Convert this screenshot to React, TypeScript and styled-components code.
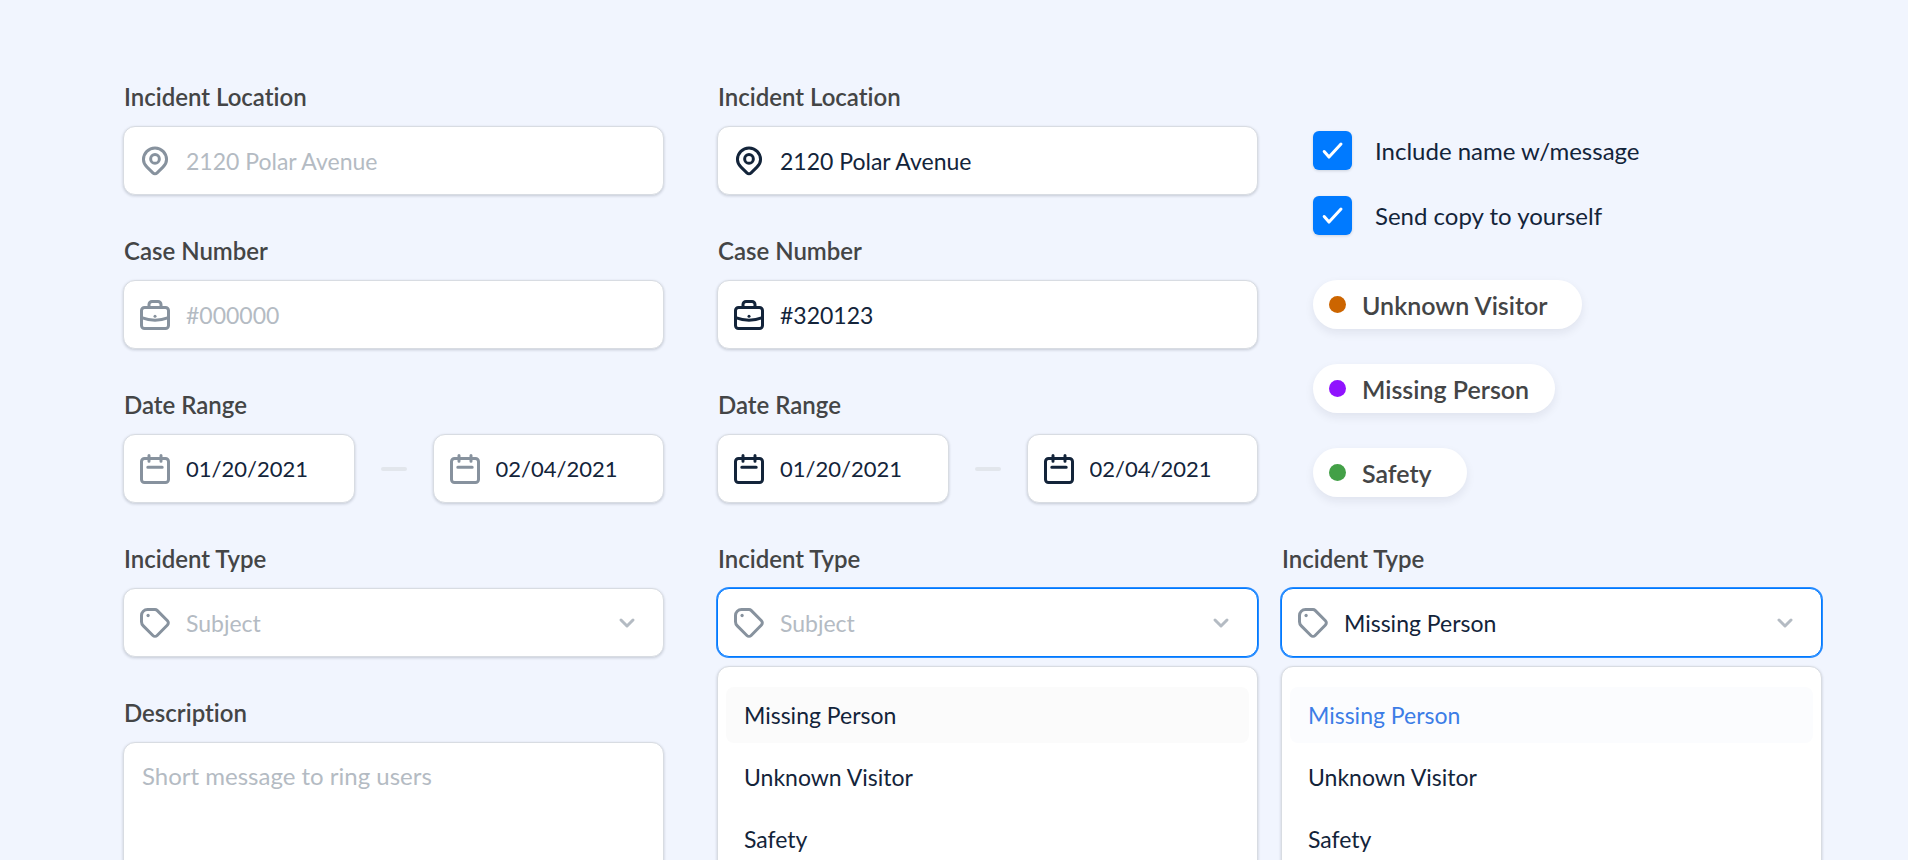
import React, { useId, useState } from "react";
import styled, { createGlobalStyle, css } from "styled-components";

const GlobalStyle = createGlobalStyle`
  *, *::before, *::after { box-sizing: border-box; }
  body {
    margin: 0;
    background: #f1f5fe;
    font-family: Lato, "Noto Sans", sans-serif;
    font-variant-ligatures: none;
    color: #13243a;
  }
  input, select, textarea, button { font: inherit; color: inherit; }
`;

const Page = styled.main`
  display: flex;
  align-items: flex-start;
  height: 100vh;
  overflow: hidden;
  padding: 83px 86px 0 123px;
`;

const Column = styled.section<{ $gap?: number }>`
  flex: 1 1 0;
  min-width: 0;
  display: flex;
  flex-direction: column;
  gap: 42px;
  margin-right: ${(p) => p.$gap ?? 0}px;
`;

const FieldGroup = styled.div`
  display: flex;
  flex-direction: column;
  gap: 15px;
`;

const labelText = css`
  padding-left: 1px;
  font-size: 24px;
  line-height: 28px;
  font-weight: 600;
  color: #444546;
`;

const Label = styled.label`
  ${labelText}
`;

const surface = css`
  background: #fff;
  border: 1px solid #d8dce2;
  border-radius: 12px;
  box-shadow: 0 1px 3px rgba(20, 30, 50, 0.2);
`;

const FieldBox = styled.div<{ $focused?: boolean; $filled?: boolean }>`
  ${surface}
  display: flex;
  align-items: center;
  gap: 13px;
  height: 69px;
  min-width: 0;
  padding: 0 24px 0 13px;
  color: ${(p) => (p.$filled ? "#13243a" : "#87929e")};
  ${(p) =>
    p.$focused &&
    css`
      border-color: #007aff;
      box-shadow: 0 0 0 1px #2b8dff;
    `}
`;

const control = css`
  flex: 1;
  min-width: 0;
  width: 100%;
  padding: 0;
  border: 0;
  outline: 0;
  background: transparent;
  font-size: 23px;
  line-height: 28px;
  color: #13243a;
  &::placeholder {
    color: #b4bbc3;
    opacity: 1;
  }
`;

const TextInput = styled.input`
  ${control}
`;

const DateInput = styled.input`
  ${control}
  font-size: 22px;
`;

const SelectInput = styled.select<{ $empty: boolean }>`
  ${control}
  appearance: none;
  ${(p) => p.$empty && "color: #b4bbc3;"}
  option { color: #13243a; }
`;

const TextArea = styled.textarea`
  ${control}
  ${surface}
  display: block;
  flex: none;
  height: 210px;
  padding: 19px 18px;
  font-size: 24px;
  resize: none;
`;

const Icon = styled.svg`
  flex: none;
  width: 36px;
  height: 36px;
  fill: none;
  stroke: currentColor;
  stroke-width: 2;
  stroke-linecap: round;
  stroke-linejoin: round;
`;

const Chevron = styled.svg`
  flex: none;
  width: 24px;
  height: 24px;
  fill: none;
  stroke: #b4bbc3;
  stroke-width: 3;
  stroke-linecap: round;
  stroke-linejoin: round;
  pointer-events: none;
`;

const DateRow = styled.div`
  display: grid;
  grid-template-columns: minmax(0, 1fr) 26px minmax(0, 1fr);
  align-items: center;
  column-gap: 26px;
`;

const Dash = styled.span`
  height: 4px;
  border-radius: 2px;
  background: #e2e6ec;
`;

const Fieldset = styled.fieldset`
  margin: 0;
  padding: 0;
  border: 0;
  min-width: 0;
`;

const Legend = styled.legend`
  ${labelText}
  padding-right: 0;
  margin-bottom: 15px;
`;

const Options = styled.ul`
  ${surface}
  list-style: none;
  margin: -6px 0 0;
  padding: 20px 8px 24px;
  display: flex;
  flex-direction: column;
  gap: 6px;
`;

const Option = styled.li<{ $state?: "hover" | "selected" }>`
  padding: 14px 18px;
  border-radius: 8px;
  font-size: 23px;
  line-height: 28px;
  cursor: pointer;
  ${(p) => p.$state === "hover" && "background: #fbfbfb;"}
  ${(p) => p.$state === "selected" && "background: #fbfcfe; color: #3c7de6;"}
`;

const Extras = styled.div`
  display: flex;
  flex-direction: column;
  gap: 45px;
  padding: 48px 0 6px 32px;
`;

const CheckList = styled.div`
  display: flex;
  flex-direction: column;
  gap: 26px;
`;

const CheckLabel = styled.label`
  display: flex;
  align-items: center;
  gap: 23px;
  font-size: 24px;
  line-height: 28px;
  cursor: pointer;
`;

const CheckFrame = styled.span`
  display: grid;
  width: 39px;
  height: 39px;
  > * { grid-area: 1 / 1; }
`;

const CheckInput = styled.input`
  appearance: none;
  width: 39px;
  height: 39px;
  margin: 0;
  border-radius: 6px;
  background: #fff;
  box-shadow: 0 1px 3px rgba(20, 30, 50, 0.16);
  &:checked { background: #007aff; }
  &:not(:checked) + svg { visibility: hidden; }
`;

const CheckMark = styled.svg`
  width: 39px;
  height: 39px;
  fill: none;
  stroke: #fff;
  stroke-width: 3;
  stroke-linecap: round;
  stroke-linejoin: round;
  pointer-events: none;
`;

const ChipList = styled.div`
  display: flex;
  flex-direction: column;
  align-items: flex-start;
  gap: 35px;
`;

const Chip = styled.span<{ $end: number }>`
  display: inline-flex;
  align-items: center;
  gap: 16px;
  height: 49px;
  padding: 0 ${(p) => p.$end}px 0 16px;
  border-radius: 25px;
  background: #fff;
  box-shadow: 0 4px 10px rgba(20, 30, 50, 0.08);
  font-size: 25px;
  line-height: 28px;
  font-weight: 600;
  color: #444546;
`;

const Dot = styled.span<{ $color: string }>`
  width: 17px;
  height: 17px;
  border-radius: 50%;
  background: ${(p) => p.$color};
`;

const PinIcon = () => (
  <Icon viewBox="0 0 24 24" aria-hidden="true">
    <path d="M4.3 11a7.7 7.7 0 0 1 15.4 0c0 1.9-.9 3.6-2.4 5.1l-3.9 3.8a2 2 0 0 1-2.8 0l-3.9-3.8C5.2 14.6 4.3 12.9 4.3 11z" />
    <circle cx="12" cy="10.6" r="2.9" />
  </Icon>
);

const CaseIcon = () => (
  <Icon viewBox="0 0 24 24" aria-hidden="true">
    <rect x="3" y="7" width="18" height="14" rx="2" />
    <path d="M8 7V5a2 2 0 0 1 2-2h4a2 2 0 0 1 2 2v2" />
    <path d="M3 13.8q9 3.4 18 0" />
    <circle cx="12" cy="12.9" r="1" fill="currentColor" stroke="none" />
  </Icon>
);

const CalendarIcon = () => (
  <Icon viewBox="0 0 24 24" aria-hidden="true">
    <rect x="3" y="5" width="18" height="16" rx="2" />
    <path d="M8 3v3.8M16 3v3.8M7.2 10.9h9.6" />
  </Icon>
);

const TagIcon = () => (
  <Icon viewBox="0 0 24 24" aria-hidden="true">
    <path d="M7 3h5a2 2 0 0 1 1.4.6l6.9 6.9a2 2 0 0 1 0 2.8l-6.9 7a2 2 0 0 1-2.8 0L4.2 13.9A4 4 0 0 1 3 11.1V7a4 4 0 0 1 4-4z" />
    <circle cx="7.4" cy="7" r="1.1" fill="currentColor" stroke="none" />
  </Icon>
);

const TYPES = ["Missing Person", "Unknown Visitor", "Safety"];

type TextFieldProps = {
  label: string;
  icon: React.ReactNode;
  placeholder: string;
  initial?: string;
};

function TextField({ label, icon, placeholder, initial = "" }: TextFieldProps) {
  const id = useId();
  const [value, setValue] = useState(initial);
  return (
    <FieldGroup>
      <Label htmlFor={id}>{label}</Label>
      <FieldBox $filled={value !== ""}>
        {icon}
        <TextInput
          id={id}
          value={value}
          placeholder={placeholder}
          onChange={(e) => setValue(e.target.value)}
        />
      </FieldBox>
    </FieldGroup>
  );
}

function DateRange({ filled }: { filled?: boolean }) {
  return (
    <Fieldset>
      <Legend>Date Range</Legend>
      <DateRow>
        <FieldBox $filled={filled}>
          <CalendarIcon />
          <DateInput aria-label="Start date" defaultValue="01/20/2021" />
        </FieldBox>
        <Dash />
        <FieldBox $filled={filled}>
          <CalendarIcon />
          <DateInput aria-label="End date" defaultValue="02/04/2021" />
        </FieldBox>
      </DateRow>
    </Fieldset>
  );
}

type TypeSelectProps = { initial?: string; open?: boolean };

function TypeSelect({ initial = "", open }: TypeSelectProps) {
  const id = useId();
  const [value, setValue] = useState(initial);
  return (
    <FieldGroup>
      <Label htmlFor={id}>Incident Type</Label>
      <FieldBox $focused={open}>
        <TagIcon />
        <SelectInput
          id={id}
          value={value}
          $empty={value === ""}
          onChange={(e) => setValue(e.target.value)}
        >
          <option value="" disabled>Subject</option>
          {TYPES.map((t) => (
            <option key={t}>{t}</option>
          ))}
        </SelectInput>
        <Chevron viewBox="0 0 24 24" aria-hidden="true">
          <path d="M6 9l6 6 6-6" />
        </Chevron>
      </FieldBox>
      {open && (
        <Options role="listbox" aria-label="Incident Type">
          {TYPES.map((t, i) => (
            <Option
              key={t}
              role="option"
              aria-selected={t === value}
              $state={t === value ? "selected" : i === 0 && value === "" ? "hover" : undefined}
              onClick={() => setValue(t)}
            >
              {t}
            </Option>
          ))}
        </Options>
      )}
    </FieldGroup>
  );
}

function Check({ children }: { children: React.ReactNode }) {
  return (
    <CheckLabel>
      <CheckFrame>
        <CheckInput type="checkbox" defaultChecked />
        <CheckMark viewBox="0 0 39 39" aria-hidden="true">
          <path d="M11.2 20.5l4.8 5.6L28 13" />
        </CheckMark>
      </CheckFrame>
      {children}
    </CheckLabel>
  );
}

export default function App() {
  const descriptionId = useId();
  return (
    <>
      <GlobalStyle />
      <Page>
        <Column $gap={53}>
          <TextField label="Incident Location" icon={<PinIcon />} placeholder="2120 Polar Avenue" />
          <TextField label="Case Number" icon={<CaseIcon />} placeholder="#000000" />
          <DateRange />
          <TypeSelect />
          <FieldGroup>
            <Label htmlFor={descriptionId}>Description</Label>
            <TextArea id={descriptionId} placeholder="Short message to ring users" />
          </FieldGroup>
        </Column>
        <Column $gap={23}>
          <TextField
            label="Incident Location"
            icon={<PinIcon />}
            placeholder="2120 Polar Avenue"
            initial="2120 Polar Avenue"
          />
          <TextField label="Case Number" icon={<CaseIcon />} placeholder="#000000" initial="#320123" />
          <DateRange filled />
          <TypeSelect open />
        </Column>
        <Column>
          <Extras>
            <CheckList>
              <Check>Include name w/message</Check>
              <Check>Send copy to yourself</Check>
            </CheckList>
            <ChipList>
              <Chip $end={35}><Dot $color="#cc6500" />Unknown Visitor</Chip>
              <Chip $end={26}><Dot $color="#9013fe" />Missing Person</Chip>
              <Chip $end={35}><Dot $color="#43a047" />Safety</Chip>
            </ChipList>
          </Extras>
          <TypeSelect open initial="Missing Person" />
        </Column>
      </Page>
    </>
  );
}
